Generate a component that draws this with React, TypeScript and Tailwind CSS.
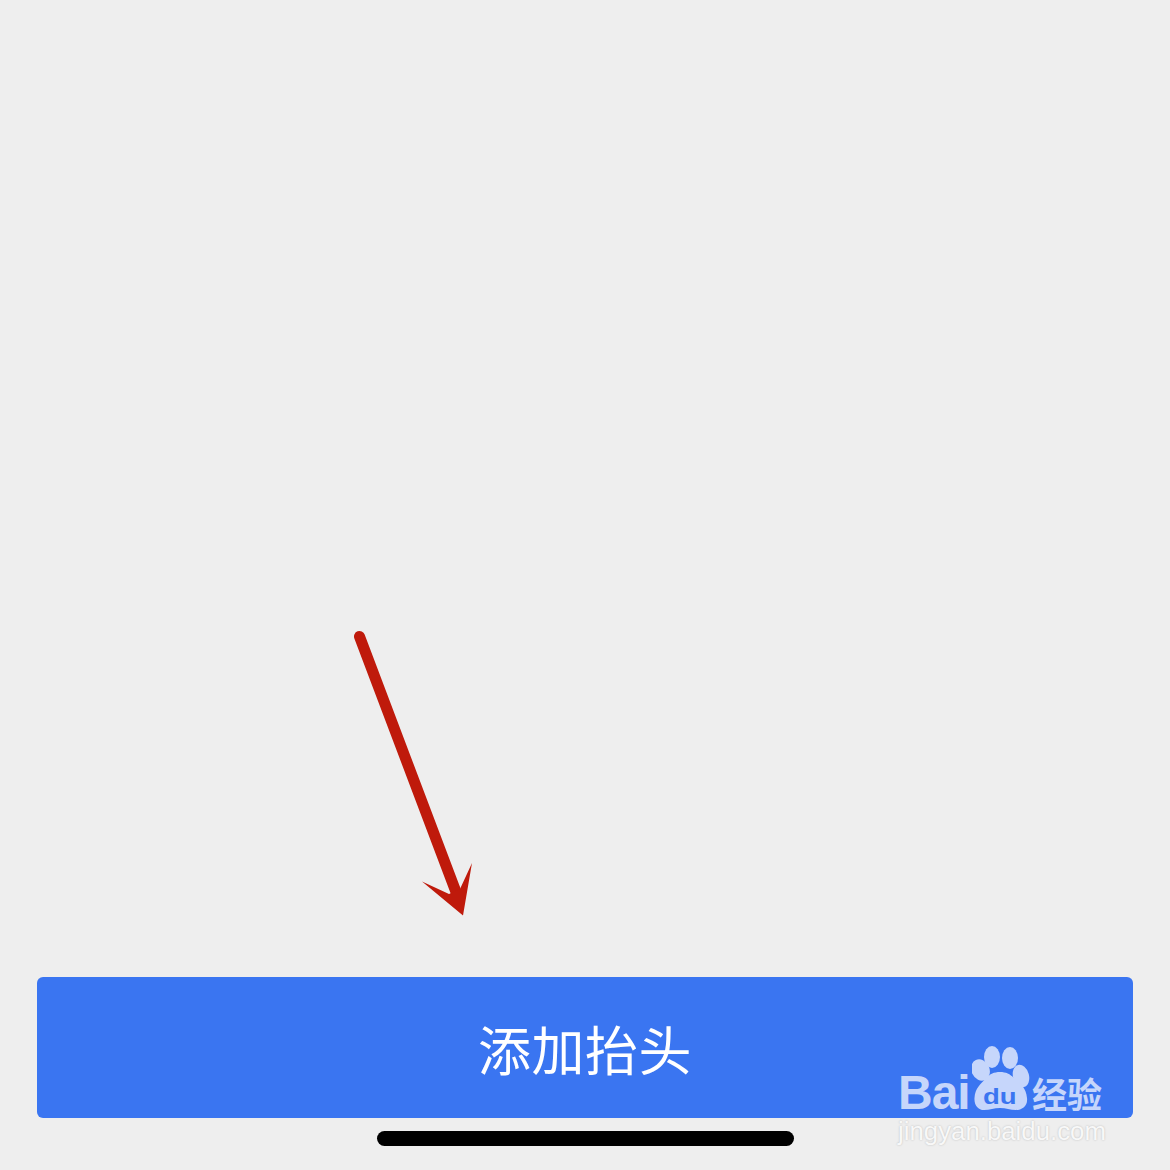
export default function App() {
  return (
    <div className="relative w-[1170px] h-[1170px] overflow-hidden bg-[#eeeeee] flex flex-col justify-end items-center" style={{ fontFamily: '"Noto Sans CJK SC", sans-serif' }}>
      <button className="w-[1096px] h-[141px] rounded-[6px] bg-[#3a75f1] text-white text-[53px] font-normal leading-none tracking-[0.5px] flex items-center justify-center pt-[1px]">
        添加抬头
      </button>
      <div className="mt-[13px] mb-[24px] w-[417px] h-[15px] rounded-full bg-black" />

      {/* annotation arrow */}
      <svg className="absolute left-[340px] top-[620px]" width="150" height="310" viewBox="0 0 150 310" fill="none">
        <path d="M19.5 16.5 L116 272" stroke="#bf1a0b" strokeWidth="11" strokeLinecap="round" />
        <path d="M123 295.5 L132 243 L120 269 L109 274 L82 261.5 Z" fill="#bf1a0b" />
      </svg>

      {/* watermark */}
      <div className="absolute left-[898px] top-[1044px] w-[210px] h-[100px]">
        <svg className="absolute left-[74px] top-0" width="60" height="68" viewBox="0 0 60 68">
          <ellipse cx="20" cy="13" rx="8" ry="11" fill="#c6d6fb" />
          <ellipse cx="38" cy="14" rx="8" ry="11" fill="#c6d6fb" />
          <ellipse cx="8.5" cy="26" rx="9" ry="11" transform="rotate(-25 8.5 26)" fill="#c6d6fb" />
          <ellipse cx="49" cy="32" rx="8" ry="11.5" transform="rotate(-15 49 32)" fill="#c6d6fb" />
          <path d="M28 28 C34 28 38 30 42 34 C46 39 54 42 55 54 C56 62 50 66 44 66 C38 66 34 64 28 64 C22 64 18 66 12 66 C6 66 2 61 2.5 54 C3 44 9 40 14 34 C18 30 22 28 28 28 Z" fill="#c6d6fb" />
        </svg>
        <span className="absolute left-[85px] top-[39px] text-[22px] leading-[28px] font-bold text-[#3a75f1] origin-left scale-x-[1.25]" style={{ fontFamily: '"Liberation Sans", sans-serif' }}>du</span>
        <span className="absolute left-0 top-[21px] text-[48px] leading-[56px] tracking-[-1px] font-bold text-[#c6d6fb]" style={{ fontFamily: '"Liberation Sans", sans-serif' }}>Bai</span>
        <span className="absolute left-[134px] top-[27px] text-[35px] leading-[44px] font-bold whitespace-nowrap text-[#c6d6fb]">经验</span>
        <span className="absolute left-0 top-[73px] text-[25.8px] leading-[28px] whitespace-nowrap text-[#f8f8f8] [text-shadow:0_0_2px_#b8b8b8]" style={{ fontFamily: '"Liberation Sans", sans-serif' }}>jingyan.baidu.com</span>
      </div>
    </div>
  );
}
